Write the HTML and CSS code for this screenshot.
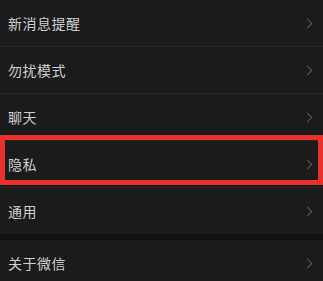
FILE: index.html
```html
<!DOCTYPE html>
<html lang="zh-CN">
<head>
    <meta charset="UTF-8">
    <meta name="viewport" content="width=device-width, initial-scale=1.0">
    <title>设置</title>
    <link rel="stylesheet" href="styles.css">
</head>
<body>
    <div class="settings">
        <div class="group">
            <div class="row"><span class="label">新消息提醒</span><span class="arrow"></span></div>
            <div class="row"><span class="label">勿扰模式</span><span class="arrow"></span></div>
            <div class="row"><span class="label">聊天</span><span class="arrow"></span></div>
            <div class="row"><span class="label">隐私</span><span class="arrow"></span></div>
            <div class="row"><span class="label">通用</span><span class="arrow"></span></div>
        </div>
        <div class="group">
            <div class="row"><span class="label">关于微信</span><span class="arrow"></span></div>
        </div>
        <!-- 标注框 -->
        <div class="highlight"></div>
    </div>
</body>
</html>
```

FILE: styles.css
```css
body {
    margin: 0;
    background: #111111;
    font-family: "Noto Sans CJK SC", "Noto Sans", sans-serif;
}
.settings {
    position: relative;
    width: 323px;
    height: 281px;
    overflow: hidden;
}
.group {
    background: #1b1b1b;
}
.group + .group {
    margin-top: 6px;
}
.row {
    display: flex;
    align-items: center;
    justify-content: space-between;
    height: 46px;
    padding: 0 10px 0 8px;
}
.row + .row {
    border-top: 1px solid #262626;
}
.label {
    color: #cfcfcf;
    font-size: 14px;
    letter-spacing: 0.5px;
}
.arrow {
    width: 6px;
    height: 6px;
    border-top: 1.5px solid #5c5c5c;
    border-right: 1.5px solid #5c5c5c;
    transform: rotate(45deg);
    margin-right: 2px;
}
.highlight {
    position: absolute;
    left: 0;
    top: 135px;
    width: 313px;
    height: 40px;
    border: 5px solid #e8322b;
}
```
